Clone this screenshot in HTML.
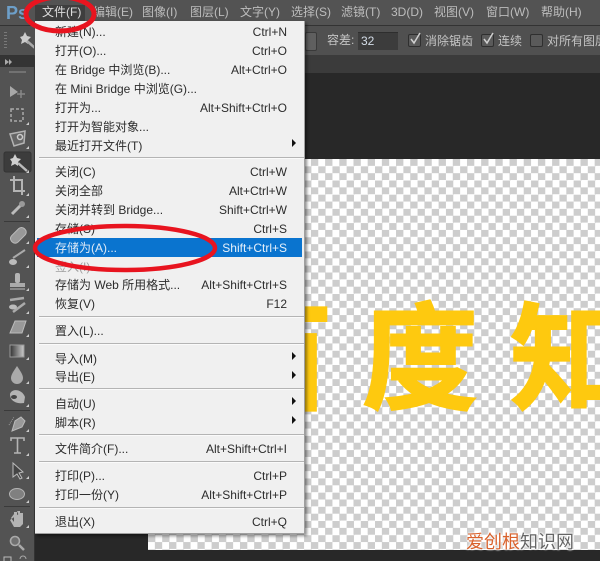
<!DOCTYPE html>
<html><head><meta charset="utf-8">
<style>
html,body{margin:0;padding:0;background:#282828}
#r{position:relative;width:600px;height:561px;overflow:hidden;background:#282828;font-family:"Liberation Sans","Noto Sans CJK SC",sans-serif;filter:blur(.3px)}
#r div,#r span{position:absolute;white-space:nowrap}
.mb{top:4px;font-size:12px;line-height:16px;color:#bdbdbd}
.op{font-size:12px;line-height:16px;color:#c4c4c4}
.cb{width:11px;height:11px;border:1px solid #2f2f2f;border-radius:2px;background:#5a5a5a;top:34px}
.it{left:55px;font-size:12px;line-height:16px;color:#2c2c2c}
.sc{right:313px;font-size:12px;line-height:16px;color:#2c2c2c}
.sp{left:39px;width:265px;height:1px;background:#b4b4b4;border-bottom:1px solid #fafafa}
.ar{left:292px;width:0;height:0;border-left:4px solid #111;border-top:4px solid transparent;border-bottom:4px solid transparent}
.big{font-family:"Noto Sans CJK SC",sans-serif;font-weight:700;font-size:116px;line-height:116px;color:#fec90f;top:292px;-webkit-text-stroke:2px #fec90f}
</style></head><body>
<div id="r">
<div style="left:0;top:0;width:600px;height:25px;background:#535353"></div>
<div style="left:0;top:25px;width:600px;height:1px;background:#333"></div>
<div style="left:0;top:26px;width:600px;height:29px;background:#505050"></div>
<div style="left:34px;top:55px;width:566px;height:18px;background:#3b3b3b"></div>
<div style="left:0;top:55px;width:34px;height:506px;background:#535353"></div>
<div style="left:0;top:55px;width:34px;height:1px;background:#333"></div>
<div style="left:0;top:56px;width:34px;height:11px;background:#343434"></div>
<div style="left:34px;top:56px;width:1px;height:505px;background:#333"></div>

<!-- canvas -->
<div style="left:148px;top:159px;width:452px;height:391px;background:repeating-conic-gradient(#cdcdcd 0 25%,#fff 0 50%) 0 0/14.2px 14.2px"></div>
<span class="big" style="left:217px">百</span>
<span class="big" style="left:362px">度</span>
<span class="big" style="left:510px">知</span>

<!-- menu bar -->
<span style="left:6px;top:3px;font-size:18px;line-height:20px;font-weight:bold;color:#6d9fc9">Ps</span>
<div style="left:35px;top:5px;width:50px;height:16px;background:#3e3e3e"></div>
<span class="mb" style="left:42px;color:#ddd">文件(F)</span>
<span class="mb" style="left:93px">编辑(E)</span>
<span class="mb" style="left:142px">图像(I)</span>
<span class="mb" style="left:190px">图层(L)</span>
<span class="mb" style="left:240px">文字(Y)</span>
<span class="mb" style="left:291px">选择(S)</span>
<span class="mb" style="left:341px">滤镜(T)</span>
<span class="mb" style="left:391px">3D(D)</span>
<span class="mb" style="left:434px">视图(V)</span>
<span class="mb" style="left:486px">窗口(W)</span>
<span class="mb" style="left:541px">帮助(H)</span>

<!-- options -->
<div style="left:305px;top:32px;width:10px;height:17px;background:#5f5f5f;border:1px solid #3a3a3a;border-radius:2px"></div>
<span class="op" style="left:327px;top:32px">容差:</span>
<div style="left:358px;top:32px;width:40px;height:17px;background:#3c3c3c;border-top:1px solid #2e2e2e"></div>
<span class="op" style="left:361px;top:33px;color:#d4dde8">32</span>
<div class="cb" style="left:408px"></div>
<span class="op" style="left:425px;top:33px">消除锯齿</span>
<div class="cb" style="left:481px"></div>
<span class="op" style="left:498px;top:33px">连续</span>
<div class="cb" style="left:530px"></div>
<span class="op" style="left:547px;top:33px">对所有图层取样</span>

<!-- tool icons -->
<svg style="position:absolute;left:0;top:26px" width="34" height="535" viewBox="0 26 34 535">
<g fill="#a8a8a8" stroke="none">
<g fill="#7a7a7a"><rect x="4" y="32" width="3" height="1"/><rect x="4" y="35" width="3" height="1"/><rect x="4" y="38" width="3" height="1"/><rect x="4" y="41" width="3" height="1"/><rect x="4" y="44" width="3" height="1"/><rect x="4" y="47" width="3" height="1"/><rect x="9" y="71" width="17" height="2" opacity=".8"/></g>
<polygon points="5,59 5,65 9,62" fill="#aaa"/><polygon points="9,59 9,65 12,62" fill="#aaa"/>
<polygon points="25,32 27,36 31,37 28,40 28,44 25,42 21,44 22,40 20,37 23,36" fill="#ccc"/>
<line x1="27" y1="41" x2="35" y2="48" stroke="#aaa" stroke-width="2.5"/>
<polygon points="10,86 10,97 18,92"/>
<path d="M17 94h8M21 90v8" stroke="#888" stroke-width="1.5" fill="none"/>
<rect x="11" y="109" width="12" height="12" fill="none" stroke="#aaa" stroke-width="1.5" stroke-dasharray="3 2"/>
<path d="M10 134 L25 131 L24 143 L14 146 Z" fill="#666" stroke="#b4b4b4" stroke-width="1.5"/>
<circle cx="20" cy="137" r="2.5" fill="none" stroke="#ccc" stroke-width="1.5"/>
<rect x="4" y="152" width="27" height="20" rx="2" fill="#3c3c3c" stroke="#333"/>
<polygon points="15,154 17,158 21,159 18,162 18,166 15,164 11,166 12,162 10,159 13,158" fill="#d0d0d0"/>
<line x1="18" y1="163" x2="27" y2="171" stroke="#bbb" stroke-width="2.5"/>
<path d="M14 176V191H25M10 180H22V195" fill="none" stroke="#b4b4b4" stroke-width="2"/>
<path d="M12 214 L21 205" stroke="#bbb" stroke-width="3"/><circle cx="22" cy="204" r="3" fill="#999"/>
<rect x="4" y="221" width="26" height="1" fill="#3a3a3a"/>
<rect x="9" y="231" width="18" height="9" rx="4" transform="rotate(-45 18 235)" fill="#999" stroke="#bbb"/>
<path d="M13 258 L25 250" stroke="#aaa" stroke-width="2"/><ellipse cx="13" cy="262" rx="4" ry="3" fill="#bbb"/>
<rect x="10" y="283" width="15" height="4" fill="#aaa"/><rect x="10" y="288" width="15" height="2" fill="#888"/><rect x="15" y="273" width="5" height="10" rx="2" fill="#b4b4b4"/>
<path d="M10 300 L24 298 M13 312 L25 303" stroke="#aaa" stroke-width="2.5"/><ellipse cx="13" cy="307" rx="4" ry="2.5" fill="#bbb"/>
<polygon points="15,321 26,321 22,333 10,333" fill="#999" stroke="#bbb"/>
<defs><linearGradient id="g"><stop offset="0" stop-color="#333"/><stop offset="1" stop-color="#ccc"/></linearGradient></defs>
<rect x="10" y="345" width="14" height="12" fill="url(#g)" stroke="#999"/>
<path d="M17 366 C13 372 11 375 11 378 A6 6 0 0 0 23 378 C23 375 21 372 17 366Z" fill="#aaa"/>
<path d="M10 394 C12 388 22 389 25 397 L24 403 C18 404 10 402 10 394Z" fill="#b4b4b4"/><ellipse cx="14" cy="397" rx="3" ry="2" fill="#444"/>
<rect x="4" y="410" width="26" height="1" fill="#3a3a3a"/>
<polygon points="12,431 15,421 21,417 25,421 22,427" fill="#999" stroke="#bbb"/>
<path d="M9 425 L14 417" stroke="#999" stroke-dasharray="1 1"/>
<path d="M11 441V438H24V441M17.5 438V453M14 453H21" fill="none" stroke="#b4b4b4" stroke-width="1.6"/>
<polygon points="13,463 13,477 17,474 20,479 22,478 19,473 23,472" fill="#444" stroke="#bbb"/>
<ellipse cx="17" cy="494" rx="7.5" ry="5.5" fill="#808080" stroke="#b4b4b4"/>
<rect x="4" y="506" width="26" height="1" fill="#3a3a3a"/>
<path d="M11 518 L14 522 V514 M14 514V512 M14 518V512 H17 V518 M17 511H20V518 M20 513H23V524 L20 527 H14 L10 520Z" fill="#b4b4b4"/>
<circle cx="15" cy="541" r="4.5" fill="#707070" stroke="#aaa" stroke-width="1.6"/><line x1="19" y1="545" x2="24" y2="550" stroke="#aaa" stroke-width="2.5"/>
<rect x="4" y="557" width="7" height="6" fill="none" stroke="#bbb"/><path d="M20 559 a3 3 0 0 1 6 0" fill="none" stroke="#aaa"/>
<g fill="#ccc">
<polygon points="29,122 29,125 26,125"/><polygon points="29,146 29,149 26,149"/><polygon points="29,170 29,173 26,173"/><polygon points="29,193 29,196 26,196"/><polygon points="29,215 29,218 26,218"/><polygon points="29,241 29,244 26,244"/><polygon points="29,265 29,268 26,268"/><polygon points="29,288 29,291 26,291"/><polygon points="29,311 29,314 26,314"/><polygon points="29,334 29,337 26,337"/><polygon points="29,357 29,360 26,360"/><polygon points="29,381 29,384 26,384"/><polygon points="29,404 29,407 26,407"/><polygon points="29,429 29,432 26,432"/><polygon points="29,453 29,456 26,456"/><polygon points="29,476 29,479 26,479"/><polygon points="29,500 29,503 26,503"/><polygon points="29,525 29,528 26,528"/>
</g>
</g>
</svg>

<!-- menu -->
<div style="left:35px;top:21px;width:269px;height:512px;background:#f0f0f0;border-right:1px solid #a0a0a0;border-bottom:1px solid #a0a0a0;box-shadow:2px 2px 3px rgba(0,0,0,.45)"></div>
<div style="left:37px;top:238px;width:265px;height:19px;background:#0a74cf"></div>

<span class="it" style="top:24px">新建(N)...</span><span class="sc" style="top:24px">Ctrl+N</span>
<span class="it" style="top:43px">打开(O)...</span><span class="sc" style="top:43px">Ctrl+O</span>
<span class="it" style="top:62px">在 Bridge 中浏览(B)...</span><span class="sc" style="top:62px">Alt+Ctrl+O</span>
<span class="it" style="top:81px">在 Mini Bridge 中浏览(G)...</span>
<span class="it" style="top:100px">打开为...</span><span class="sc" style="top:100px">Alt+Shift+Ctrl+O</span>
<span class="it" style="top:119px">打开为智能对象...</span>
<span class="it" style="top:138px">最近打开文件(T)</span><div class="ar" style="top:139px"></div>
<div class="sp" style="top:157px"></div>
<span class="it" style="top:164px">关闭(C)</span><span class="sc" style="top:164px">Ctrl+W</span>
<span class="it" style="top:183px">关闭全部</span><span class="sc" style="top:183px">Alt+Ctrl+W</span>
<span class="it" style="top:202px">关闭并转到 Bridge...</span><span class="sc" style="top:202px">Shift+Ctrl+W</span>
<span class="it" style="top:221px">存储(S)</span><span class="sc" style="top:221px">Ctrl+S</span>
<span class="it" style="top:240px;color:#dfeaf6">存储为(A)...</span><span class="sc" style="top:240px;color:#e6f0fa">Shift+Ctrl+S</span>
<span class="it" style="top:259px;color:#a0a0a0">签入(I)...</span>
<span class="it" style="top:277px">存储为 Web 所用格式...</span><span class="sc" style="top:277px">Alt+Shift+Ctrl+S</span>
<span class="it" style="top:296px">恢复(V)</span><span class="sc" style="top:296px">F12</span>
<div class="sp" style="top:316px"></div>
<span class="it" style="top:323px">置入(L)...</span>
<div class="sp" style="top:343px"></div>
<span class="it" style="top:351px">导入(M)</span><div class="ar" style="top:352px"></div>
<span class="it" style="top:369px">导出(E)</span><div class="ar" style="top:371px"></div>
<div class="sp" style="top:388px"></div>
<span class="it" style="top:396px">自动(U)</span><div class="ar" style="top:397px"></div>
<span class="it" style="top:415px">脚本(R)</span><div class="ar" style="top:416px"></div>
<div class="sp" style="top:434px"></div>
<span class="it" style="top:441px">文件简介(F)...</span><span class="sc" style="top:441px">Alt+Shift+Ctrl+I</span>
<div class="sp" style="top:461px"></div>
<span class="it" style="top:468px">打印(P)...</span><span class="sc" style="top:468px">Ctrl+P</span>
<span class="it" style="top:487px">打印一份(Y)</span><span class="sc" style="top:487px">Alt+Shift+Ctrl+P</span>
<div class="sp" style="top:507px"></div>
<span class="it" style="top:514px">退出(X)</span><span class="sc" style="top:514px">Ctrl+Q</span>

<!-- check marks -->
<svg style="position:absolute;left:0;top:0" width="600" height="60">
<path d="M411 39l3 4 6-10M484 39l3 4 6-10" fill="none" stroke="#d0d0d0" stroke-width="1.5"/>
</svg>

<!-- red ellipses -->
<svg style="position:absolute;left:0;top:0" width="600" height="561">
<ellipse cx="60" cy="14" rx="34" ry="17" fill="none" stroke="#e8141f" stroke-width="5"/>
<ellipse cx="125" cy="248" rx="90" ry="22" fill="none" stroke="#e8141f" stroke-width="4.5"/>
</svg>

<!-- watermark -->
<span style="left:466px;top:530px;font-size:18px;line-height:24px;color:#d9612b;text-shadow:0 0 2px #fff,0 0 2px #fff,0 0 2px #fff">爱创根<span style="position:static;color:#666">知识网</span></span>
</div>
</body></html>
